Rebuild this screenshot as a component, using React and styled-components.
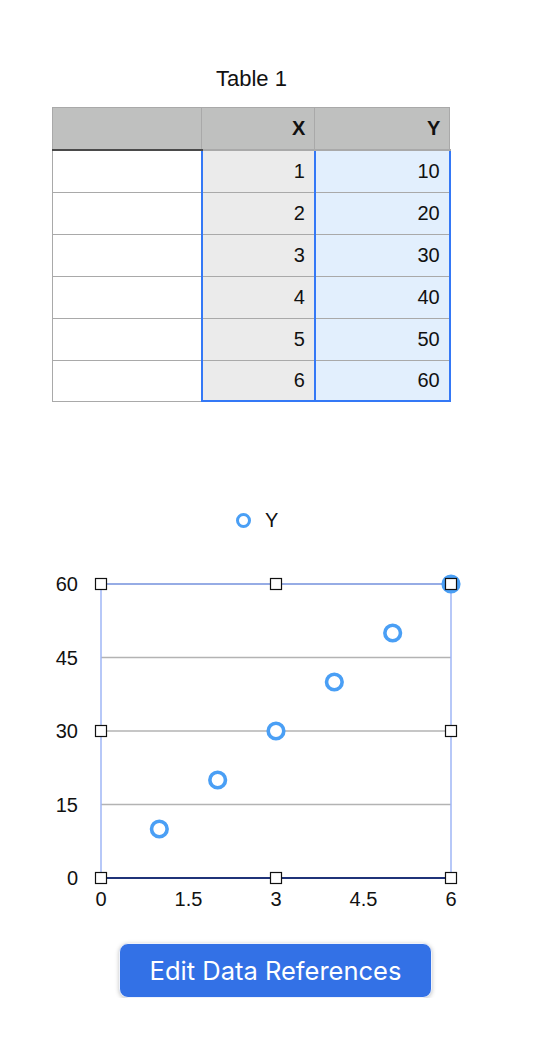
import React from 'react';
import styled, { createGlobalStyle } from 'styled-components';

const GlobalStyle = createGlobalStyle`
  html, body {
    margin: 0;
    padding: 0;
    background: #ffffff;
    font-family: "Liberation Sans", Arial, sans-serif;
    color: #111;
  }
`;

const rows = [
  { x: 1, y: 10 },
  { x: 2, y: 20 },
  { x: 3, y: 30 },
  { x: 4, y: 40 },
  { x: 5, y: 50 },
  { x: 6, y: 60 },
];

const Page = styled.div`
  width: 540px;
  display: flex;
  flex-direction: column;
  align-items: flex-start;
`;

const TableBlock = styled.div`
  width: 397px;
  margin-left: 53px;
  padding-top: 66px;
  display: flex;
  flex-direction: column;
  align-items: center;
`;

const Title = styled.div`
  font-size: 22px;
  line-height: 26px;
  height: 26px;
  margin-bottom: 15px;
`;

const Sheet = styled.table`
  width: 397px;
  border-collapse: collapse;
  table-layout: fixed;
  font-size: 20px;
`;

const HeadCell = styled.th`
  background: #bfc0bf;
  height: 41px;
  padding: 0 9px 0 0;
  text-align: right;
  font-weight: bold;
  border: 1px solid #a9a9a9;
  border-bottom: 2px solid ${({ $first }) => ($first ? '#4a4a4a' : '#a9a9a9')};
`;

const Cell = styled.td`
  height: ${({ $bottom }) => ($bottom ? 39 : 41)}px;
  padding: 0 9px 0 0;
  text-align: right;
  border: 1px solid #a9a9a9;
  background: ${({ $kind }) =>
    $kind === 'x' ? '#ebebeb' : $kind === 'y' ? '#e2effd' : '#ffffff'};
  ${({ $kind }) =>
    $kind !== 'blank' &&
    `
    border-left: 2px solid #3478f6;
    border-right: 2px solid #3478f6;
  `}
  ${({ $top, $kind }) => $top && $kind !== 'blank' && `border-top: 2px solid #3478f6;`}
  ${({ $bottom, $kind }) => $bottom && $kind !== 'blank' && `border-bottom: 2px solid #3478f6;`}
`;

const Legend = styled.div`
  margin-top: 106px;
  margin-left: 236px;
  height: 24px;
  display: flex;
  align-items: center;
  gap: 14px;
  font-size: 20px;
`;

const LegendDot = styled.span`
  width: 9px;
  height: 9px;
  border-radius: 50%;
  border: 3.5px solid #4a9ff5;
`;

const ChartSvg = styled.svg`
  display: block;
  margin-top: 28px;
  font-family: "Liberation Sans", Arial, sans-serif;
`;

const Button = styled.button`
  margin-top: 33px;
  margin-left: 119px;
  width: 313px;
  height: 55px;
  border-radius: 9px;
  border: 1.5px solid #eef2fb;
  background: #3371e6;
  color: #ffffff;
  font-family: Inter, "Noto Sans", sans-serif;
  font-size: 25.5px;
  box-shadow: 0 1px 4px rgba(0, 0, 0, 0.25);
  cursor: pointer;
`;

// chart geometry (svg coordinates)
const L = 101;
const R = 451;
const T = 24;
const B = 318;
const px = (v) => L + ((R - L) * v) / 6;
const py = (v) => B - ((B - T) * v) / 60;

const Handle = ({ x, y }) => (
  <rect x={x - 5.5} y={y - 5.5} width={11} height={11} fill="#fff" stroke="#111" strokeWidth={1.2} />
);

const Chart = () => (
  <ChartSvg width={540} height={350} viewBox="0 0 540 350">
    {[15, 30, 45].map((v) => (
      <line key={v} x1={L} x2={R} y1={py(v)} y2={py(v)} stroke="#b3b3b3" strokeWidth={1.5} />
    ))}
    <line x1={L} x2={L} y1={T} y2={B} stroke="#9fb6f6" strokeWidth={1.5} />
    <line x1={R} x2={R} y1={T} y2={B} stroke="#9fb6f6" strokeWidth={1.5} />
    <line x1={L} x2={R} y1={T} y2={T} stroke="#7390dc" strokeWidth={1.5} />
    <line x1={L} x2={R} y1={B} y2={B} stroke="#1f3378" strokeWidth={2} />
    {[0, 15, 30, 45, 60].map((v) => (
      <text key={v} x={78} y={py(v) + 7} textAnchor="end" fontSize={20} fill="#111">
        {v}
      </text>
    ))}
    {[0, 1.5, 3, 4.5, 6].map((v) => (
      <text key={v} x={px(v)} y={B + 28} textAnchor="middle" fontSize={20} fill="#111">
        {v}
      </text>
    ))}
    {rows.map((r) => (
      <circle key={r.x} cx={px(r.x)} cy={py(r.y)} r={7.8} fill="#fff" stroke="#4a9ff5" strokeWidth={3.6} />
    ))}
    {[
      [L, T], [(L + R) / 2, T], [R, T],
      [L, (T + B) / 2], [R, (T + B) / 2],
      [L, B], [(L + R) / 2, B], [R, B],
    ].map(([x, y]) => (
      <Handle key={`${x}-${y}`} x={x} y={y} />
    ))}
  </ChartSvg>
);

export default function App() {
  return (
    <>
      <GlobalStyle />
      <Page>
        <TableBlock>
          <Title>Table 1</Title>
          <Sheet>
            <colgroup>
              <col style={{ width: 149 }} />
              <col style={{ width: 113 }} />
              <col style={{ width: 135 }} />
            </colgroup>
            <thead>
              <tr>
                <HeadCell $first />
                <HeadCell>X</HeadCell>
                <HeadCell>Y</HeadCell>
              </tr>
            </thead>
            <tbody>
              {rows.map((r, i) => (
                <tr key={r.x}>
                  <Cell $kind="blank" $bottom={i === rows.length - 1} />
                  <Cell $kind="x" $top={i === 0} $bottom={i === rows.length - 1}>{r.x}</Cell>
                  <Cell $kind="y" $top={i === 0} $bottom={i === rows.length - 1}>{r.y}</Cell>
                </tr>
              ))}
            </tbody>
          </Sheet>
        </TableBlock>
        <Legend>
          <LegendDot />
          Y
        </Legend>
        <Chart />
        <Button>Edit Data References</Button>
      </Page>
    </>
  );
}
